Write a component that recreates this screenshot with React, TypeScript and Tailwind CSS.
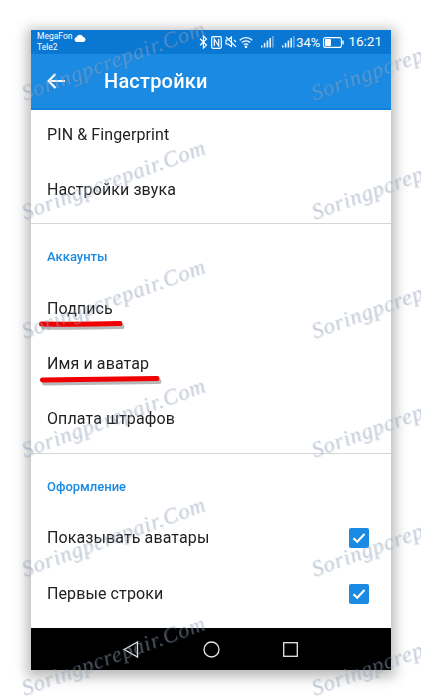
import React from "react";

const Signal = ({ className = "" }: { className?: string }) => (
  <svg width="13" height="12" viewBox="0 0 13 12" className={className} fill="#fff">
    <rect x="0" y="9.5" width="1.6" height="2" opacity=".9" />
    <rect x="2.8" y="7" width="1.6" height="4.5" opacity=".9" />
    <rect x="5.6" y="4.5" width="1.6" height="7" opacity=".9" />
    <rect x="8.4" y="2" width="1.6" height="9.5" opacity=".9" />
    <rect x="11.2" y="0" width="1.4" height="11.5" opacity=".45" />
  </svg>
);

const Check = () => (
  <div className="w-5 h-5 rounded-[2px] bg-[#1a8ae3] flex items-center justify-center">
    <svg width="14" height="12" viewBox="0 0 14 12" fill="none" stroke="#fff" strokeWidth="2.2">
      <path d="M1.5 6.2 L5.2 9.8 L12.5 2" />
    </svg>
  </div>
);

const Row = ({ label, check }: { label: string; check?: boolean }) => (
  <div className="h-[55px] shrink-0 flex items-center justify-between pl-4 pr-[22px] text-[16px] text-[#212121] tracking-[0.1px]">
    <span>{label}</span>
    {check && <Check />}
  </div>
);

const marks: [number, number][] = [];
for (const y of [95, 214, 333, 452, 571, 690]) {
  marks.push([22, y]);
  marks.push([312, y]);
}

export default function App() {
  return (
    <div className="relative w-[421px] h-[700px] overflow-hidden bg-white pt-[30px] pl-[31px] font-['Roboto',sans-serif]">
      <div className="w-[360px] h-[640px] flex flex-col bg-white shadow-[0_3px_12px_4px_rgba(0,0,0,0.28)] blur-[0.3px]">
        <div className="h-6 shrink-0 bg-[#0a78d3] flex items-center justify-between pl-[6px] pr-[9px] text-white">
          <div className="flex items-start">
            <div className="text-[8.5px] leading-[11px]">
              <div>MegaFon</div>
              <div>Tele2</div>
            </div>
            <svg width="12" height="8" viewBox="0 0 12 8" fill="#fff" className="ml-[2px] mt-[3px]">
              <path d="M2.5 8 A2.4 2.4 0 0 1 2.4 3.3 A3.6 3.6 0 0 1 9.2 2.9 A2.6 2.6 0 0 1 9.6 8 Z" />
            </svg>
          </div>
          <div className="flex items-center">
            <svg width="9" height="14" viewBox="0 0 9 14" fill="none" stroke="#fff" strokeWidth="1.2">
              <path d="M1 3.8 L7.5 10 L4.4 13 V1 L7.5 4 L1 10.2" />
            </svg>
            <svg width="11" height="13" viewBox="0 0 11 13" fill="none" stroke="#fff" strokeWidth="1.2" className="ml-[3px]">
              <rect x="0.7" y="0.7" width="9.6" height="11.6" rx="1.2" />
              <path d="M3.3 10 V3 L7.7 10 V3" />
            </svg>
            <svg width="12" height="12" viewBox="0 0 12 12" fill="none" stroke="#fff" strokeWidth="1.1" className="ml-[3px]">
              <path d="M1 4 H3 L6.5 1 V10.5 L3 8 H1 Z" />
              <path d="M1 1 L11 11" />
              <path d="M9 4 L11 6" />
            </svg>
            <svg width="14" height="11" viewBox="0 0 14 11" fill="none" stroke="#fff" strokeWidth="1.2" className="ml-[2px]">
              <path d="M0.7 3.2 A9 9 0 0 1 13.3 3.2" />
              <path d="M2.8 5.5 A6 6 0 0 1 11.2 5.5" />
              <path d="M4.9 7.8 A3 3 0 0 1 9.1 7.8" />
              <circle cx="7" cy="9.8" r=".7" fill="#fff" />
            </svg>
            <Signal className="ml-[8px]" />
            <Signal className="ml-[8px]" />
            <span className="text-[13px] leading-none ml-[1px]">34%</span>
            <svg width="21" height="11" viewBox="0 0 21 11" fill="none" className="ml-[3px]">
              <rect x="0.6" y="0.6" width="17.8" height="9.8" rx="2" stroke="#fff" strokeWidth="1.1" />
              <rect x="2" y="2" width="6" height="7" rx=".8" fill="#fff" />
              <rect x="19.3" y="3.5" width="1.4" height="4" fill="#fff" />
            </svg>
            <span className="text-[13.5px] leading-none ml-[4px]">16:21</span>
          </div>
        </div>

        <div className="h-14 shrink-0 bg-[#1a8ae3] border-b-2 border-[#0f7fda] flex items-center text-white">
          <svg width="18" height="16" viewBox="0 0 18 16" fill="none" stroke="#fff" strokeWidth="2.2" className="ml-[16px]">
            <path d="M18 8 H2 M8.5 1 L1.6 8 L8.5 15" />
          </svg>
          <span className="ml-[39px] text-[20px] font-medium leading-none tracking-[0.2px]">Настройки</span>
        </div>

        <div className="flex-1 flex flex-col -mt-[3px]">
          <Row label="PIN & Fingerprint" />
          <Row label="Настройки звука" />
          <div className="h-px shrink-0 bg-[#d6d6d6] mt-[6px]" />
          <div className="h-[57px] shrink-0 pt-[9px] pl-4 flex items-center text-[13px] font-medium text-[#1a8ae3]">Аккаунты</div>
          <Row label="Подпись" />
          <Row label="Имя и аватар" />
          <Row label="Оплата штрафов" />
          <div className="h-px shrink-0 bg-[#d6d6d6] mt-[7px]" />
          <div className="h-14 shrink-0 pt-[10px] pl-4 flex items-center text-[13px] font-medium text-[#1a8ae3]">Оформление</div>
          <Row label="Показывать аватары" check />
          <div className="mt-px" />
          <Row label="Первые строки" check />
        </div>

        <div className="h-[42px] shrink-0 bg-black flex items-center">
          <svg width="16" height="17" viewBox="0 0 16 17" fill="none" stroke="#e8e8e8" strokeWidth="1.3" className="ml-[92px]">
            <path d="M14.5 1 V16 L1.2 8.5 Z" />
          </svg>
          <svg width="17" height="17" viewBox="0 0 17 17" fill="none" stroke="#e8e8e8" strokeWidth="1.3" className="ml-[64px]">
            <circle cx="8.5" cy="8.5" r="7.5" />
          </svg>
          <svg width="15" height="15" viewBox="0 0 15 15" fill="none" stroke="#e8e8e8" strokeWidth="1.3" className="ml-[63px]">
            <rect x=".7" y=".7" width="13.6" height="13.6" />
          </svg>
        </div>
      </div>

      <svg width="421" height="700" className="absolute left-0 top-0 pointer-events-none">
        <g fill="none" strokeLinecap="round">
          <g stroke="#000" strokeOpacity=".28" strokeWidth="5" transform="translate(2 3)">
            <path d="M41.5 324 Q80 324.5 120 323.5" />
            <path d="M42.5 380 Q100 379.5 157 378.5" />
          </g>
          <path d="M41.5 324 Q80 324.5 120 323.5" stroke="#f00000" strokeWidth="5" />
          <path d="M42.5 380 Q100 379.5 157 378.5" stroke="#f00000" strokeWidth="5" />
        </g>
      </svg>

      {marks.map(([x, y], i) => (
        <div
          key={i}
          style={{ left: x, top: y - 12 }}
          className="absolute origin-left rotate-[-20deg] whitespace-nowrap font-['Liberation_Serif',serif] italic text-[22px] leading-none tracking-[0.9px] text-[rgba(150,172,205,0.42)] [text-shadow:1px_1px_1px_rgba(120,120,120,0.2)] pointer-events-none"
        >
          Soringpcrepair.Com
        </div>
      ))}
    </div>
  );
}
